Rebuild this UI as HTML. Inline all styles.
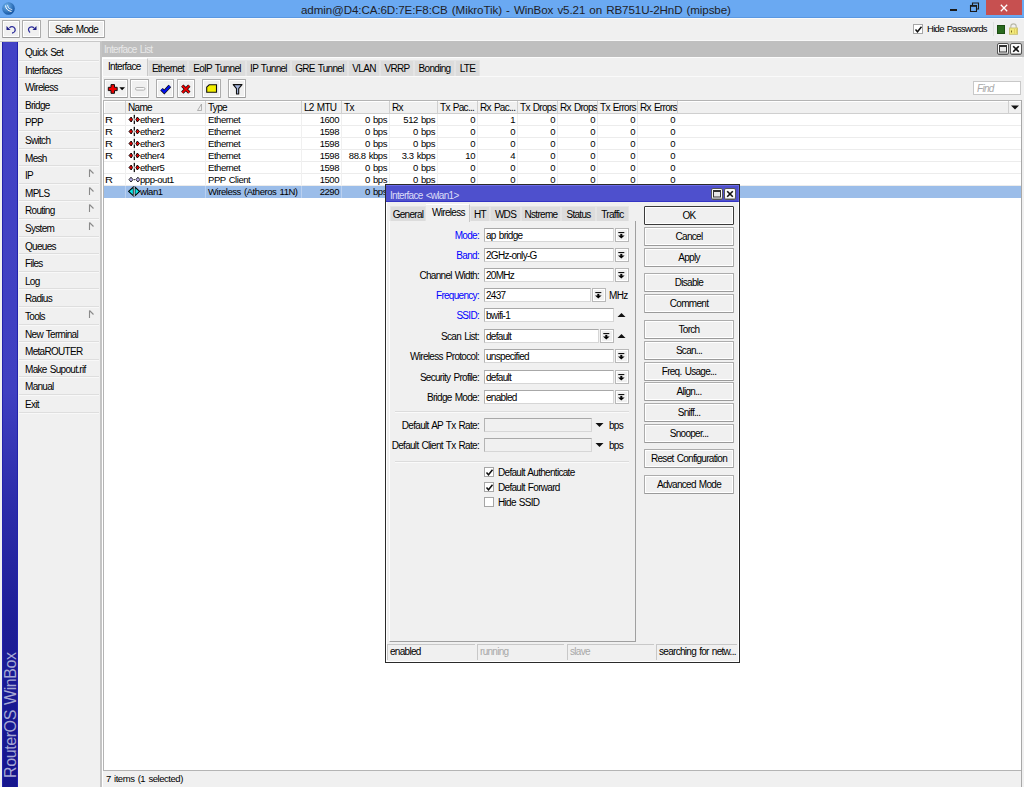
<!DOCTYPE html><html><head><meta charset="utf-8"><style>
*{margin:0;padding:0;box-sizing:border-box}
html,body{width:1024px;height:787px;overflow:hidden}
body{position:relative;background:#f0f0f0;font-family:"Liberation Sans",sans-serif;font-size:10px;color:#000;letter-spacing:-0.7px;word-spacing:1px}
.a{position:absolute}
.t{position:absolute;white-space:nowrap;line-height:12px;height:12px}
.r{font-size:9.5px;letter-spacing:-0.45px}
.rr{font-size:9.5px;transform:scaleX(1.15);transform-origin:0 0}
.btn{position:absolute;border:1px solid #acacac;border-bottom-color:#9a9a9a;border-radius:1px;background:#f0f0f0;box-shadow:inset 1px 1px 0 #fff,inset -1px -1px 0 #fff;text-align:center;line-height:18px;white-space:nowrap}
.fld{position:absolute;background:#fff;border:1px solid #d6d6d6;border-top-color:#a8a8a8;border-left-color:#b4b4b4;line-height:14px;padding-left:1px;white-space:nowrap}
.dd{position:absolute;background:#f0f0f0;border:1px solid #b8b8b8;box-shadow:inset 1px 1px 0 #fff,inset -1px -1px 0 #fff}
.sep{position:absolute;height:1px;background:#dcdcdc}
.tab{position:absolute;background:#dcdcdc;border:1px solid #e4e4e4;border-bottom:none;text-align:center;line-height:16px;white-space:nowrap}
.lbl{position:absolute;white-space:nowrap;line-height:12px;text-align:right}
.blue{color:#0000ff}
.gr{color:#a8a8a8}
</style></head><body>
<div class="a " style="left:0px;top:0px;width:1024px;height:18px;background:#6aa9f2"></div>
<div class="a " style="left:0px;top:17px;width:1024px;height:1px;background:#5a98e2"></div>
<svg class="a" style="left:1px;top:1px" width="15" height="15" viewBox="0 0 15 15"><defs><radialGradient id="ig" cx="0.35" cy="0.3" r="0.8"><stop offset="0" stop-color="#6fb2ec"/><stop offset="1" stop-color="#0d4d9c"/></radialGradient></defs><circle cx="7.5" cy="7.5" r="6.3" fill="url(#ig)"/><path d="M4.5 4.5 Q5 9.5 10.5 10.5" stroke="#fff" stroke-width="1" fill="none"/><path d="M6.3 3.8 Q6.8 8 11.3 8.8" stroke="#fff" stroke-width="0.8" fill="none" opacity="0.9"/></svg>
<div class="t " style="left:301px;top:3px;font-size:11.6px;letter-spacing:-0.1px;color:#1e1e28;line-height:14px;height:14px">admin@D4:CA:6D:7E:F8:CB (MikroTik) - WinBox v5.21 on RB751U-2HnD (mipsbe)</div>
<div class="a " style="left:950px;top:9px;width:7px;height:2px;background:#1a1a1a"></div>
<svg class="a" style="left:969px;top:2px" width="11" height="10"><rect x="1.5" y="3.5" width="6" height="6" fill="none" stroke="#1a1a1a" stroke-width="1.1"/><rect x="1" y="3" width="7" height="1.8" fill="#1a1a1a"/><path d="M3.5 3 V1 H9.5 V7 H8" fill="none" stroke="#1a1a1a" stroke-width="1.1"/></svg>
<div class="a " style="left:986px;top:0px;width:36px;height:15px;background:#c75050"></div>
<svg class="a" style="left:1000px;top:4px" width="8" height="8"><path d="M0.8 0.8 L7.2 7.2 M7.2 0.8 L0.8 7.2" stroke="#fff" stroke-width="1.3"/></svg>
<div class="a " style="left:0px;top:18px;width:1024px;height:1px;background:#fafafa"></div>
<div class="btn" style="left:2px;top:20px;width:18px;height:18px"></div>
<svg class="a" style="left:5px;top:23px" width="12" height="12"><path d="M4.5 4.8 A3.2 3.2 0 1 1 7 10" fill="none" stroke="#2b2b9a" stroke-width="1.3"/><path d="M1.5 3 L5.5 7 L1.5 7 Z" fill="#1f1f88"/></svg>
<div class="btn" style="left:22px;top:20px;width:19px;height:18px"></div>
<svg class="a" style="left:26px;top:23px" width="12" height="12"><path d="M8 5 Q6 2.8 3.5 4.5 Q1.3 6.5 4 9.5" fill="none" stroke="#2b2b9a" stroke-width="1.2"/><path d="M10.5 3 L6.5 7 L10.5 7 Z" fill="#1f1f88"/></svg>
<div class="btn" style="left:48px;top:20px;width:57px;height:18px;line-height:17px">Safe Mode</div>
<div class="a " style="left:913px;top:24px;width:10px;height:10px;background:#fff;border:1px solid #a6a6a6"></div>
<svg class="a" style="left:914px;top:25px" width="9" height="9"><path d="M1.5 4.5 L3.5 6.8 L7.5 1.8" fill="none" stroke="#111" stroke-width="1.5"/></svg>
<div class="t " style="left:927px;top:23px;font-size:9.5px">Hide Passwords</div>
<div class="a " style="left:993px;top:22px;width:1px;height:14px;background:#e0e0e0"></div>
<div class="a " style="left:997px;top:25px;width:8px;height:9px;background:#2a6a1e;border:1px solid #1c4d12"></div>
<svg class="a" style="left:1008px;top:23px" width="11" height="12"><path d="M2.8 5 V3.6 A2.7 2.7 0 0 1 8.2 3.6 V5" fill="none" stroke="#b8b8a8" stroke-width="1.1"/><rect x="1.5" y="5" width="8" height="6.3" fill="#f2ea7a" stroke="#c8c070" stroke-width="0.9"/><rect x="3" y="7.5" width="1" height="2" fill="#807020"/><rect x="6" y="6" width="0.8" height="4.5" fill="#e0c860"/><rect x="8" y="6" width="0.8" height="4.5" fill="#e0c860"/></svg>
<div class="a " style="left:0px;top:40px;width:1024px;height:1px;background:#f8f8f8"></div>
<div class="a " style="left:0px;top:41px;width:1024px;height:1px;background:#c8c8c8"></div>
<div class="a " style="left:2px;top:42px;width:16px;height:745px;background:linear-gradient(#4343c6 0%,#3f3fc1 47%,#2c2caa 62%,#1d1d97 78%,#16168d 100%);border-left:1px solid #2222aa;border-right:1px solid #2222aa"></div>
<div class="t" style="left:4px;top:778px;font-size:16px;letter-spacing:-0.4px;color:#a6a8d4;transform-origin:0 0;transform:rotate(-90deg);line-height:14px;height:14px">RouterOS WinBox</div>
<div class="t " style="left:25px;top:47px;">Quick Set</div>
<div class="sep" style="left:19px;top:60px;width:80px;background:#dedede"></div>
<div class="sep" style="left:19px;top:61px;width:80px;background:#f8f8f8"></div>
<div class="t " style="left:25px;top:65px;">Interfaces</div>
<div class="sep" style="left:19px;top:77px;width:80px;background:#dedede"></div>
<div class="sep" style="left:19px;top:78px;width:80px;background:#f8f8f8"></div>
<div class="t " style="left:25px;top:82px;">Wireless</div>
<div class="sep" style="left:19px;top:95px;width:80px;background:#dedede"></div>
<div class="sep" style="left:19px;top:96px;width:80px;background:#f8f8f8"></div>
<div class="t " style="left:25px;top:100px;">Bridge</div>
<div class="sep" style="left:19px;top:112px;width:80px;background:#dedede"></div>
<div class="sep" style="left:19px;top:113px;width:80px;background:#f8f8f8"></div>
<div class="t " style="left:25px;top:117px;">PPP</div>
<div class="sep" style="left:19px;top:130px;width:80px;background:#dedede"></div>
<div class="sep" style="left:19px;top:131px;width:80px;background:#f8f8f8"></div>
<div class="t " style="left:25px;top:135px;">Switch</div>
<div class="sep" style="left:19px;top:148px;width:80px;background:#dedede"></div>
<div class="sep" style="left:19px;top:149px;width:80px;background:#f8f8f8"></div>
<div class="t " style="left:25px;top:153px;">Mesh</div>
<div class="sep" style="left:19px;top:165px;width:80px;background:#dedede"></div>
<div class="sep" style="left:19px;top:166px;width:80px;background:#f8f8f8"></div>
<div class="t " style="left:25px;top:170px;">IP</div>
<div class="sep" style="left:19px;top:183px;width:80px;background:#dedede"></div>
<div class="sep" style="left:19px;top:184px;width:80px;background:#f8f8f8"></div>
<svg class="a" style="left:88px;top:169px" width="7" height="9"><path d="M1.5 0.5 V8 M1.5 0.5 L5.5 4.5" stroke="#8a8a8a" stroke-width="1.1" fill="none"/></svg>
<div class="t " style="left:25px;top:188px;">MPLS</div>
<div class="sep" style="left:19px;top:200px;width:80px;background:#dedede"></div>
<div class="sep" style="left:19px;top:201px;width:80px;background:#f8f8f8"></div>
<svg class="a" style="left:88px;top:187px" width="7" height="9"><path d="M1.5 0.5 V8 M1.5 0.5 L5.5 4.5" stroke="#8a8a8a" stroke-width="1.1" fill="none"/></svg>
<div class="t " style="left:25px;top:205px;">Routing</div>
<div class="sep" style="left:19px;top:218px;width:80px;background:#dedede"></div>
<div class="sep" style="left:19px;top:219px;width:80px;background:#f8f8f8"></div>
<svg class="a" style="left:88px;top:204px" width="7" height="9"><path d="M1.5 0.5 V8 M1.5 0.5 L5.5 4.5" stroke="#8a8a8a" stroke-width="1.1" fill="none"/></svg>
<div class="t " style="left:25px;top:223px;">System</div>
<div class="sep" style="left:19px;top:236px;width:80px;background:#dedede"></div>
<div class="sep" style="left:19px;top:237px;width:80px;background:#f8f8f8"></div>
<svg class="a" style="left:88px;top:222px" width="7" height="9"><path d="M1.5 0.5 V8 M1.5 0.5 L5.5 4.5" stroke="#8a8a8a" stroke-width="1.1" fill="none"/></svg>
<div class="t " style="left:25px;top:241px;">Queues</div>
<div class="sep" style="left:19px;top:253px;width:80px;background:#dedede"></div>
<div class="sep" style="left:19px;top:254px;width:80px;background:#f8f8f8"></div>
<div class="t " style="left:25px;top:258px;">Files</div>
<div class="sep" style="left:19px;top:271px;width:80px;background:#dedede"></div>
<div class="sep" style="left:19px;top:272px;width:80px;background:#f8f8f8"></div>
<div class="t " style="left:25px;top:276px;">Log</div>
<div class="sep" style="left:19px;top:288px;width:80px;background:#dedede"></div>
<div class="sep" style="left:19px;top:289px;width:80px;background:#f8f8f8"></div>
<div class="t " style="left:25px;top:293px;">Radius</div>
<div class="sep" style="left:19px;top:306px;width:80px;background:#dedede"></div>
<div class="sep" style="left:19px;top:307px;width:80px;background:#f8f8f8"></div>
<div class="t " style="left:25px;top:311px;">Tools</div>
<div class="sep" style="left:19px;top:324px;width:80px;background:#dedede"></div>
<div class="sep" style="left:19px;top:325px;width:80px;background:#f8f8f8"></div>
<svg class="a" style="left:88px;top:310px" width="7" height="9"><path d="M1.5 0.5 V8 M1.5 0.5 L5.5 4.5" stroke="#8a8a8a" stroke-width="1.1" fill="none"/></svg>
<div class="t " style="left:25px;top:329px;">New Terminal</div>
<div class="sep" style="left:19px;top:341px;width:80px;background:#dedede"></div>
<div class="sep" style="left:19px;top:342px;width:80px;background:#f8f8f8"></div>
<div class="t " style="left:25px;top:346px;">MetaROUTER</div>
<div class="sep" style="left:19px;top:359px;width:80px;background:#dedede"></div>
<div class="sep" style="left:19px;top:360px;width:80px;background:#f8f8f8"></div>
<div class="t " style="left:25px;top:364px;">Make Supout.rif</div>
<div class="sep" style="left:19px;top:376px;width:80px;background:#dedede"></div>
<div class="sep" style="left:19px;top:377px;width:80px;background:#f8f8f8"></div>
<div class="t " style="left:25px;top:381px;">Manual</div>
<div class="sep" style="left:19px;top:394px;width:80px;background:#dedede"></div>
<div class="sep" style="left:19px;top:395px;width:80px;background:#f8f8f8"></div>
<div class="t " style="left:25px;top:399px;">Exit</div>
<div class="sep" style="left:19px;top:412px;width:80px;background:#dedede"></div>
<div class="sep" style="left:19px;top:413px;width:80px;background:#f8f8f8"></div>
<div class="a " style="left:100px;top:42px;width:2px;height:745px;background:#c4c4c4"></div>
<div class="a " style="left:102px;top:57px;width:1px;height:730px;background:#fff"></div>
<div class="a " style="left:102px;top:41px;width:922px;height:16px;background:#bfbfbf"></div>
<div class="t " style="left:104px;top:44px;color:#e9e9e9">Interface List</div>
<div class="a" style="left:997px;top:43px;width:12px;height:12px;border:1px solid #555;border-radius:2px;background:#fbfbfb;box-shadow:inset 0 -1px 0 #aaa"></div>
<svg class="a" style="left:999px;top:45px" width="8" height="8"><rect x="0.5" y="0.5" width="7" height="6.5" fill="#e8e8e8" stroke="#333"/><rect x="0" y="0" width="8" height="2" fill="#333"/></svg>
<div class="a" style="left:1010px;top:43px;width:12px;height:12px;border:1px solid #555;border-radius:2px;background:#fbfbfb;box-shadow:inset 0 -1px 0 #aaa"></div>
<svg class="a" style="left:1012px;top:45px" width="8" height="8"><path d="M1.2 1.2 L6.8 6.8 M6.8 1.2 L1.2 6.8" stroke="#111" stroke-width="1.6"/></svg>
<div class="a " style="left:102px;top:57px;width:920px;height:1px;background:#fcfcfc"></div>
<div class="a" style="left:103px;top:58px;width:45px;height:18px;background:#f0f0f0;border-right:1px solid #c8c8c8;border-top:1px solid #fff"></div>
<div class="t " style="left:108px;top:61px;">Interface</div>
<div class="tab" style="left:148px;top:60px;width:40px;height:16px">Ethernet</div>
<div class="tab" style="left:188px;top:60px;width:58px;height:16px">EoIP Tunnel</div>
<div class="tab" style="left:246px;top:60px;width:45px;height:16px">IP Tunnel</div>
<div class="tab" style="left:291px;top:60px;width:57px;height:16px">GRE Tunnel</div>
<div class="tab" style="left:348px;top:60px;width:32px;height:16px">VLAN</div>
<div class="tab" style="left:380px;top:60px;width:34px;height:16px">VRRP</div>
<div class="tab" style="left:414px;top:60px;width:41px;height:16px">Bonding</div>
<div class="tab" style="left:455px;top:60px;width:25px;height:16px">LTE</div>
<div class="a " style="left:102px;top:76px;width:920px;height:1px;background:#fafafa"></div>
<div class="btn" style="left:104px;top:79px;width:24px;height:19px"></div>
<div class="btn" style="left:130px;top:79px;width:19px;height:19px"></div>
<div class="btn" style="left:156px;top:79px;width:18px;height:19px"></div>
<div class="btn" style="left:177px;top:79px;width:18px;height:19px"></div>
<div class="btn" style="left:202px;top:79px;width:19px;height:19px"></div>
<div class="btn" style="left:228px;top:79px;width:18px;height:19px"></div>
<svg class="a" style="left:100px;top:78px" width="150" height="20"><path d="M11 6.6 H14.5 V9.3 H17.2 V12.6 H14.5 V15.3 H11 V12.6 H8.3 V9.3 H11 Z" fill="#f00000" stroke="#111" stroke-width="1"/><path d="M19.3 9.2 H25 L22.15 12.2 Z" fill="#000"/><rect x="35.5" y="9.5" width="9.5" height="2.6" rx="1.3" fill="#fafafa" stroke="#b0b0b0" stroke-width="1"/><path d="M61.5 11.2 L64.3 14 L69.8 8" fill="none" stroke="#111" stroke-width="3.6" stroke-linejoin="miter"/><path d="M61.5 11.2 L64.3 14 L69.8 8" fill="none" stroke="#0010f0" stroke-width="2"/><path d="M82.3 7.6 L89.3 14.6 M89.3 7.6 L82.3 14.6" stroke="#111" stroke-width="3.4"/><path d="M82.3 7.6 L89.3 14.6 M89.3 7.6 L82.3 14.6" stroke="#f00000" stroke-width="1.9"/><path d="M106.7 9.2 L109.2 6.8 H116.5 V14.3 H106.7 Z" fill="#f4f000" stroke="#111" stroke-width="1.1"/><path d="M133.2 6.6 H142 L138.7 10.6 V16 H136.5 V10.6 Z" fill="#a4b4dc" stroke="#111" stroke-width="1.1" stroke-linejoin="round"/></svg>
<div class="a" style="left:973px;top:81px;width:48px;height:14px;background:#fff;border:1px solid #c8c8c8"></div>
<div class="t " style="left:977px;top:83px;font-style:italic;color:#a8a8a8;-webkit-text-stroke:0">Find</div>
<div class="a " style="left:103px;top:100px;width:919px;height:671px;background:#fff;border:1px solid #b4b4b4;border-right-color:#a8a8a8"></div>
<div class="a " style="left:104px;top:101px;width:917px;height:13px;background:#f0f0f0;border-bottom:1px solid #cfcfcf;box-shadow:inset 1px 1px 0 #fff"></div>
<div class="a " style="left:125px;top:101px;width:1px;height:13px;background:#d0d0d0"></div>
<div class="t " style="left:128px;top:102px;">Name</div>
<div class="a " style="left:205px;top:101px;width:1px;height:13px;background:#d0d0d0"></div>
<div class="t " style="left:208px;top:102px;">Type</div>
<div class="a " style="left:301px;top:101px;width:1px;height:13px;background:#d0d0d0"></div>
<div class="t " style="left:304px;top:102px;">L2 MTU</div>
<div class="a " style="left:341px;top:101px;width:1px;height:13px;background:#d0d0d0"></div>
<div class="t " style="left:344px;top:102px;">Tx</div>
<div class="a " style="left:389px;top:101px;width:1px;height:13px;background:#d0d0d0"></div>
<div class="t " style="left:392px;top:102px;">Rx</div>
<div class="a " style="left:437px;top:101px;width:1px;height:13px;background:#d0d0d0"></div>
<div class="t " style="left:440px;top:102px;">Tx Pac...</div>
<div class="a " style="left:477px;top:101px;width:1px;height:13px;background:#d0d0d0"></div>
<div class="t " style="left:480px;top:102px;">Rx Pac...</div>
<div class="a " style="left:517px;top:101px;width:1px;height:13px;background:#d0d0d0"></div>
<div class="t " style="left:520px;top:102px;">Tx Drops</div>
<div class="a " style="left:557px;top:101px;width:1px;height:13px;background:#d0d0d0"></div>
<div class="t " style="left:560px;top:102px;">Rx Drops</div>
<div class="a " style="left:597px;top:101px;width:1px;height:13px;background:#d0d0d0"></div>
<div class="t " style="left:600px;top:102px;">Tx Errors</div>
<div class="a " style="left:637px;top:101px;width:1px;height:13px;background:#d0d0d0"></div>
<div class="t " style="left:640px;top:102px;">Rx Errors</div>
<div class="a " style="left:677px;top:101px;width:1px;height:13px;background:#d0d0d0"></div>
<div class="a " style="left:1008px;top:101px;width:1px;height:13px;background:#d0d0d0"></div>
<svg class="a" style="left:1010px;top:104px" width="10" height="7"><path d="M1 1.5 H9 L5 5.5 Z" fill="#111"/></svg>
<svg class="a" style="left:197px;top:103px" width="6" height="9"><path d="M0.5 7.5 L4.5 1 V7.5 Z" fill="none" stroke="#a0a0a0" stroke-width="0.8"/></svg>
<div class="a " style="left:104px;top:125px;width:917px;height:1px;background:#ececec"></div>
<div class="a " style="left:125px;top:114px;width:1px;height:12px;background:#f0f0f0"></div>
<div class="a " style="left:205px;top:114px;width:1px;height:12px;background:#f0f0f0"></div>
<div class="a " style="left:301px;top:114px;width:1px;height:12px;background:#f0f0f0"></div>
<div class="a " style="left:341px;top:114px;width:1px;height:12px;background:#f0f0f0"></div>
<div class="a " style="left:389px;top:114px;width:1px;height:12px;background:#f0f0f0"></div>
<div class="a " style="left:437px;top:114px;width:1px;height:12px;background:#f0f0f0"></div>
<div class="a " style="left:477px;top:114px;width:1px;height:12px;background:#f0f0f0"></div>
<div class="a " style="left:517px;top:114px;width:1px;height:12px;background:#f0f0f0"></div>
<div class="a " style="left:557px;top:114px;width:1px;height:12px;background:#f0f0f0"></div>
<div class="a " style="left:597px;top:114px;width:1px;height:12px;background:#f0f0f0"></div>
<div class="a " style="left:637px;top:114px;width:1px;height:12px;background:#f0f0f0"></div>
<div class="t r rr" style="left:105px;top:114px;">R</div>
<svg class="a" style="left:128px;top:114px" width="12" height="12"><path d="M1 5.5 L3.2 3 L4.6 5.5 L3.2 8 Z" fill="#e00000" stroke="#000" stroke-width="0.9"/><path d="M11.5 5.5 L9.3 3 L7.9 5.5 L9.3 8 Z" fill="#e00000" stroke="#000" stroke-width="0.9"/><rect x="5.7" y="0.8" width="1.2" height="3.8" fill="#000"/><rect x="5.7" y="6.5" width="1.2" height="3.6" fill="#000"/><rect x="5.9" y="5.1" width="0.8" height="0.8" fill="#777"/></svg>
<div class="t r" style="left:140px;top:114px;">ether1</div>
<div class="t r" style="left:208px;top:114px;">Ethernet</div>
<div class="t r" style="left:302px;top:114px;width:37px;text-align:right">1600</div>
<div class="t r" style="left:342px;top:114px;width:45px;text-align:right">0 bps</div>
<div class="t r" style="left:390px;top:114px;width:45px;text-align:right">512 bps</div>
<div class="t r" style="left:438px;top:114px;width:37px;text-align:right">0</div>
<div class="t r" style="left:478px;top:114px;width:37px;text-align:right">1</div>
<div class="t r" style="left:518px;top:114px;width:37px;text-align:right">0</div>
<div class="t r" style="left:558px;top:114px;width:37px;text-align:right">0</div>
<div class="t r" style="left:598px;top:114px;width:37px;text-align:right">0</div>
<div class="t r" style="left:638px;top:114px;width:37px;text-align:right">0</div>
<div class="a " style="left:104px;top:137px;width:917px;height:1px;background:#ececec"></div>
<div class="a " style="left:125px;top:126px;width:1px;height:12px;background:#f0f0f0"></div>
<div class="a " style="left:205px;top:126px;width:1px;height:12px;background:#f0f0f0"></div>
<div class="a " style="left:301px;top:126px;width:1px;height:12px;background:#f0f0f0"></div>
<div class="a " style="left:341px;top:126px;width:1px;height:12px;background:#f0f0f0"></div>
<div class="a " style="left:389px;top:126px;width:1px;height:12px;background:#f0f0f0"></div>
<div class="a " style="left:437px;top:126px;width:1px;height:12px;background:#f0f0f0"></div>
<div class="a " style="left:477px;top:126px;width:1px;height:12px;background:#f0f0f0"></div>
<div class="a " style="left:517px;top:126px;width:1px;height:12px;background:#f0f0f0"></div>
<div class="a " style="left:557px;top:126px;width:1px;height:12px;background:#f0f0f0"></div>
<div class="a " style="left:597px;top:126px;width:1px;height:12px;background:#f0f0f0"></div>
<div class="a " style="left:637px;top:126px;width:1px;height:12px;background:#f0f0f0"></div>
<div class="t r rr" style="left:105px;top:126px;">R</div>
<svg class="a" style="left:128px;top:126px" width="12" height="12"><path d="M1 5.5 L3.2 3 L4.6 5.5 L3.2 8 Z" fill="#e00000" stroke="#000" stroke-width="0.9"/><path d="M11.5 5.5 L9.3 3 L7.9 5.5 L9.3 8 Z" fill="#e00000" stroke="#000" stroke-width="0.9"/><rect x="5.7" y="0.8" width="1.2" height="3.8" fill="#000"/><rect x="5.7" y="6.5" width="1.2" height="3.6" fill="#000"/><rect x="5.9" y="5.1" width="0.8" height="0.8" fill="#777"/></svg>
<div class="t r" style="left:140px;top:126px;">ether2</div>
<div class="t r" style="left:208px;top:126px;">Ethernet</div>
<div class="t r" style="left:302px;top:126px;width:37px;text-align:right">1598</div>
<div class="t r" style="left:342px;top:126px;width:45px;text-align:right">0 bps</div>
<div class="t r" style="left:390px;top:126px;width:45px;text-align:right">0 bps</div>
<div class="t r" style="left:438px;top:126px;width:37px;text-align:right">0</div>
<div class="t r" style="left:478px;top:126px;width:37px;text-align:right">0</div>
<div class="t r" style="left:518px;top:126px;width:37px;text-align:right">0</div>
<div class="t r" style="left:558px;top:126px;width:37px;text-align:right">0</div>
<div class="t r" style="left:598px;top:126px;width:37px;text-align:right">0</div>
<div class="t r" style="left:638px;top:126px;width:37px;text-align:right">0</div>
<div class="a " style="left:104px;top:149px;width:917px;height:1px;background:#ececec"></div>
<div class="a " style="left:125px;top:138px;width:1px;height:12px;background:#f0f0f0"></div>
<div class="a " style="left:205px;top:138px;width:1px;height:12px;background:#f0f0f0"></div>
<div class="a " style="left:301px;top:138px;width:1px;height:12px;background:#f0f0f0"></div>
<div class="a " style="left:341px;top:138px;width:1px;height:12px;background:#f0f0f0"></div>
<div class="a " style="left:389px;top:138px;width:1px;height:12px;background:#f0f0f0"></div>
<div class="a " style="left:437px;top:138px;width:1px;height:12px;background:#f0f0f0"></div>
<div class="a " style="left:477px;top:138px;width:1px;height:12px;background:#f0f0f0"></div>
<div class="a " style="left:517px;top:138px;width:1px;height:12px;background:#f0f0f0"></div>
<div class="a " style="left:557px;top:138px;width:1px;height:12px;background:#f0f0f0"></div>
<div class="a " style="left:597px;top:138px;width:1px;height:12px;background:#f0f0f0"></div>
<div class="a " style="left:637px;top:138px;width:1px;height:12px;background:#f0f0f0"></div>
<div class="t r rr" style="left:105px;top:138px;">R</div>
<svg class="a" style="left:128px;top:138px" width="12" height="12"><path d="M1 5.5 L3.2 3 L4.6 5.5 L3.2 8 Z" fill="#e00000" stroke="#000" stroke-width="0.9"/><path d="M11.5 5.5 L9.3 3 L7.9 5.5 L9.3 8 Z" fill="#e00000" stroke="#000" stroke-width="0.9"/><rect x="5.7" y="0.8" width="1.2" height="3.8" fill="#000"/><rect x="5.7" y="6.5" width="1.2" height="3.6" fill="#000"/><rect x="5.9" y="5.1" width="0.8" height="0.8" fill="#777"/></svg>
<div class="t r" style="left:140px;top:138px;">ether3</div>
<div class="t r" style="left:208px;top:138px;">Ethernet</div>
<div class="t r" style="left:302px;top:138px;width:37px;text-align:right">1598</div>
<div class="t r" style="left:342px;top:138px;width:45px;text-align:right">0 bps</div>
<div class="t r" style="left:390px;top:138px;width:45px;text-align:right">0 bps</div>
<div class="t r" style="left:438px;top:138px;width:37px;text-align:right">0</div>
<div class="t r" style="left:478px;top:138px;width:37px;text-align:right">0</div>
<div class="t r" style="left:518px;top:138px;width:37px;text-align:right">0</div>
<div class="t r" style="left:558px;top:138px;width:37px;text-align:right">0</div>
<div class="t r" style="left:598px;top:138px;width:37px;text-align:right">0</div>
<div class="t r" style="left:638px;top:138px;width:37px;text-align:right">0</div>
<div class="a " style="left:104px;top:161px;width:917px;height:1px;background:#ececec"></div>
<div class="a " style="left:125px;top:150px;width:1px;height:12px;background:#f0f0f0"></div>
<div class="a " style="left:205px;top:150px;width:1px;height:12px;background:#f0f0f0"></div>
<div class="a " style="left:301px;top:150px;width:1px;height:12px;background:#f0f0f0"></div>
<div class="a " style="left:341px;top:150px;width:1px;height:12px;background:#f0f0f0"></div>
<div class="a " style="left:389px;top:150px;width:1px;height:12px;background:#f0f0f0"></div>
<div class="a " style="left:437px;top:150px;width:1px;height:12px;background:#f0f0f0"></div>
<div class="a " style="left:477px;top:150px;width:1px;height:12px;background:#f0f0f0"></div>
<div class="a " style="left:517px;top:150px;width:1px;height:12px;background:#f0f0f0"></div>
<div class="a " style="left:557px;top:150px;width:1px;height:12px;background:#f0f0f0"></div>
<div class="a " style="left:597px;top:150px;width:1px;height:12px;background:#f0f0f0"></div>
<div class="a " style="left:637px;top:150px;width:1px;height:12px;background:#f0f0f0"></div>
<div class="t r rr" style="left:105px;top:150px;">R</div>
<svg class="a" style="left:128px;top:150px" width="12" height="12"><path d="M1 5.5 L3.2 3 L4.6 5.5 L3.2 8 Z" fill="#e00000" stroke="#000" stroke-width="0.9"/><path d="M11.5 5.5 L9.3 3 L7.9 5.5 L9.3 8 Z" fill="#e00000" stroke="#000" stroke-width="0.9"/><rect x="5.7" y="0.8" width="1.2" height="3.8" fill="#000"/><rect x="5.7" y="6.5" width="1.2" height="3.6" fill="#000"/><rect x="5.9" y="5.1" width="0.8" height="0.8" fill="#777"/></svg>
<div class="t r" style="left:140px;top:150px;">ether4</div>
<div class="t r" style="left:208px;top:150px;">Ethernet</div>
<div class="t r" style="left:302px;top:150px;width:37px;text-align:right">1598</div>
<div class="t r" style="left:342px;top:150px;width:45px;text-align:right">88.8 kbps</div>
<div class="t r" style="left:390px;top:150px;width:45px;text-align:right">3.3 kbps</div>
<div class="t r" style="left:438px;top:150px;width:37px;text-align:right">10</div>
<div class="t r" style="left:478px;top:150px;width:37px;text-align:right">4</div>
<div class="t r" style="left:518px;top:150px;width:37px;text-align:right">0</div>
<div class="t r" style="left:558px;top:150px;width:37px;text-align:right">0</div>
<div class="t r" style="left:598px;top:150px;width:37px;text-align:right">0</div>
<div class="t r" style="left:638px;top:150px;width:37px;text-align:right">0</div>
<div class="a " style="left:104px;top:173px;width:917px;height:1px;background:#ececec"></div>
<div class="a " style="left:125px;top:162px;width:1px;height:12px;background:#f0f0f0"></div>
<div class="a " style="left:205px;top:162px;width:1px;height:12px;background:#f0f0f0"></div>
<div class="a " style="left:301px;top:162px;width:1px;height:12px;background:#f0f0f0"></div>
<div class="a " style="left:341px;top:162px;width:1px;height:12px;background:#f0f0f0"></div>
<div class="a " style="left:389px;top:162px;width:1px;height:12px;background:#f0f0f0"></div>
<div class="a " style="left:437px;top:162px;width:1px;height:12px;background:#f0f0f0"></div>
<div class="a " style="left:477px;top:162px;width:1px;height:12px;background:#f0f0f0"></div>
<div class="a " style="left:517px;top:162px;width:1px;height:12px;background:#f0f0f0"></div>
<div class="a " style="left:557px;top:162px;width:1px;height:12px;background:#f0f0f0"></div>
<div class="a " style="left:597px;top:162px;width:1px;height:12px;background:#f0f0f0"></div>
<div class="a " style="left:637px;top:162px;width:1px;height:12px;background:#f0f0f0"></div>
<svg class="a" style="left:128px;top:162px" width="12" height="12"><path d="M1 5.5 L3.2 3 L4.6 5.5 L3.2 8 Z" fill="#e00000" stroke="#000" stroke-width="0.9"/><path d="M11.5 5.5 L9.3 3 L7.9 5.5 L9.3 8 Z" fill="#e00000" stroke="#000" stroke-width="0.9"/><rect x="5.7" y="0.8" width="1.2" height="3.8" fill="#000"/><rect x="5.7" y="6.5" width="1.2" height="3.6" fill="#000"/><rect x="5.9" y="5.1" width="0.8" height="0.8" fill="#777"/></svg>
<div class="t r" style="left:140px;top:162px;">ether5</div>
<div class="t r" style="left:208px;top:162px;">Ethernet</div>
<div class="t r" style="left:302px;top:162px;width:37px;text-align:right">1598</div>
<div class="t r" style="left:342px;top:162px;width:45px;text-align:right">0 bps</div>
<div class="t r" style="left:390px;top:162px;width:45px;text-align:right">0 bps</div>
<div class="t r" style="left:438px;top:162px;width:37px;text-align:right">0</div>
<div class="t r" style="left:478px;top:162px;width:37px;text-align:right">0</div>
<div class="t r" style="left:518px;top:162px;width:37px;text-align:right">0</div>
<div class="t r" style="left:558px;top:162px;width:37px;text-align:right">0</div>
<div class="t r" style="left:598px;top:162px;width:37px;text-align:right">0</div>
<div class="t r" style="left:638px;top:162px;width:37px;text-align:right">0</div>
<div class="a " style="left:104px;top:185px;width:917px;height:1px;background:#ececec"></div>
<div class="a " style="left:125px;top:174px;width:1px;height:12px;background:#f0f0f0"></div>
<div class="a " style="left:205px;top:174px;width:1px;height:12px;background:#f0f0f0"></div>
<div class="a " style="left:301px;top:174px;width:1px;height:12px;background:#f0f0f0"></div>
<div class="a " style="left:341px;top:174px;width:1px;height:12px;background:#f0f0f0"></div>
<div class="a " style="left:389px;top:174px;width:1px;height:12px;background:#f0f0f0"></div>
<div class="a " style="left:437px;top:174px;width:1px;height:12px;background:#f0f0f0"></div>
<div class="a " style="left:477px;top:174px;width:1px;height:12px;background:#f0f0f0"></div>
<div class="a " style="left:517px;top:174px;width:1px;height:12px;background:#f0f0f0"></div>
<div class="a " style="left:557px;top:174px;width:1px;height:12px;background:#f0f0f0"></div>
<div class="a " style="left:597px;top:174px;width:1px;height:12px;background:#f0f0f0"></div>
<div class="a " style="left:637px;top:174px;width:1px;height:12px;background:#f0f0f0"></div>
<div class="t r rr" style="left:105px;top:174px;">R</div>
<svg class="a" style="left:128px;top:174px" width="12" height="12"><path d="M1 5.6 L3 3.2 L5 5.6 L3 8 Z" fill="#b8b0ec" stroke="#111" stroke-width="0.9"/><path d="M7.9 5.6 L9.9 3.2 L11.9 5.6 L9.9 8 Z" fill="#b8b0ec" stroke="#111" stroke-width="0.9"/><rect x="5.8" y="5.1" width="1.1" height="1.1" fill="#222"/></svg>
<div class="t r" style="left:140px;top:174px;">ppp-out1</div>
<div class="t r" style="left:208px;top:174px;">PPP Client</div>
<div class="t r" style="left:302px;top:174px;width:37px;text-align:right">1500</div>
<div class="t r" style="left:342px;top:174px;width:45px;text-align:right">0 bps</div>
<div class="t r" style="left:390px;top:174px;width:45px;text-align:right">0 bps</div>
<div class="t r" style="left:438px;top:174px;width:37px;text-align:right">0</div>
<div class="t r" style="left:478px;top:174px;width:37px;text-align:right">0</div>
<div class="t r" style="left:518px;top:174px;width:37px;text-align:right">0</div>
<div class="t r" style="left:558px;top:174px;width:37px;text-align:right">0</div>
<div class="t r" style="left:598px;top:174px;width:37px;text-align:right">0</div>
<div class="t r" style="left:638px;top:174px;width:37px;text-align:right">0</div>
<div class="a " style="left:104px;top:186px;width:917px;height:12px;background:#9bbde9"></div>
<div class="a " style="left:125px;top:186px;width:1px;height:12px;background:#b9d0f0"></div>
<div class="a " style="left:205px;top:186px;width:1px;height:12px;background:#b9d0f0"></div>
<div class="a " style="left:301px;top:186px;width:1px;height:12px;background:#b9d0f0"></div>
<div class="a " style="left:341px;top:186px;width:1px;height:12px;background:#b9d0f0"></div>
<div class="a " style="left:389px;top:186px;width:1px;height:12px;background:#b9d0f0"></div>
<div class="a " style="left:437px;top:186px;width:1px;height:12px;background:#b9d0f0"></div>
<div class="a " style="left:477px;top:186px;width:1px;height:12px;background:#b9d0f0"></div>
<div class="a " style="left:517px;top:186px;width:1px;height:12px;background:#b9d0f0"></div>
<div class="a " style="left:557px;top:186px;width:1px;height:12px;background:#b9d0f0"></div>
<div class="a " style="left:597px;top:186px;width:1px;height:12px;background:#b9d0f0"></div>
<div class="a " style="left:637px;top:186px;width:1px;height:12px;background:#b9d0f0"></div>
<svg class="a" style="left:128px;top:186px" width="12" height="12"><path d="M0.6 5.4 L5.4 1 V9.8 Z" fill="#10e8e8" stroke="#000" stroke-width="1.1"/><path d="M11.6 5.4 L6.9 1 V9.8 Z" fill="#10e8e8" stroke="#000" stroke-width="1.1"/><path d="M6.15 0.5 V10.5" stroke="#e8f4ff" stroke-width="0.9"/></svg>
<div class="t r" style="left:140px;top:186px;">wlan1</div>
<div class="t r" style="left:208px;top:186px;">Wireless (Atheros 11N)</div>
<div class="t r" style="left:302px;top:186px;width:37px;text-align:right">2290</div>
<div class="t r" style="left:342px;top:186px;width:45px;text-align:right">0 bps</div>
<div class="t r" style="left:106px;top:773px;">7 items (1 selected)</div>
<div class="a " style="left:1021px;top:100px;width:1px;height:687px;background:#a8a8a8"></div>
<div class="a " style="left:385px;top:184px;width:355px;height:479px;background:#f0f0f0;border:1px solid #2a2a2a;box-shadow:inset 1px 1px 0 #fff,inset -1px -1px 0 #fff"></div>
<div class="a " style="left:386px;top:185px;width:353px;height:17px;background:#4e50cd;border-top:1px solid #6c6ce6;border-bottom:1px solid #3434c4;border-right:1px solid #6464e0"></div>
<div class="t " style="left:390px;top:190px;color:#dcdcf8">Interface &lt;wlan1&gt;</div>
<div class="a" style="left:711px;top:188px;width:12px;height:12px;border:1px solid #555;border-radius:2px;background:#fbfbfb;box-shadow:inset 0 -1px 0 #aaa"></div>
<svg class="a" style="left:713px;top:190px" width="8" height="8"><rect x="0.5" y="0.5" width="7" height="6.5" fill="#e8e8e8" stroke="#333"/><rect x="0" y="0" width="8" height="2" fill="#333"/></svg>
<div class="a" style="left:724px;top:188px;width:12px;height:12px;border:1px solid #555;border-radius:2px;background:#fbfbfb;box-shadow:inset 0 -1px 0 #aaa"></div>
<svg class="a" style="left:726px;top:190px" width="8" height="8"><path d="M1.2 1.2 L6.8 6.8 M6.8 1.2 L1.2 6.8" stroke="#111" stroke-width="1.6"/></svg>
<div class="tab" style="left:390px;top:206px;width:36px;height:15px;line-height:16px">General</div>
<div class="a" style="left:426px;top:204px;width:44px;height:18px;background:#f0f0f0;border-right:1px solid #c8c8c8;border-top:1px solid #fff"></div>
<div class="t " style="left:432px;top:207px;">Wireless</div>
<div class="tab" style="left:470px;top:206px;width:20px;height:15px;line-height:16px">HT</div>
<div class="tab" style="left:490px;top:206px;width:31px;height:15px;line-height:16px">WDS</div>
<div class="tab" style="left:521px;top:206px;width:40px;height:15px;line-height:16px">Nstreme</div>
<div class="tab" style="left:561px;top:206px;width:35px;height:15px;line-height:16px">Status</div>
<div class="tab" style="left:596px;top:206px;width:33px;height:15px;line-height:16px">Traffic</div>
<div class="a " style="left:389px;top:221px;width:247px;height:421px;border-right:1px solid #a0a0a0;border-bottom:1px solid #a0a0a0;border-left:1px solid #fff"></div>
<div class="lbl blue" style="left:380px;width:99px;top:230px;">Mode:</div>
<div class="fld" style="left:484px;top:228px;width:130px;height:14px;background:#fff">ap bridge</div>
<div class="dd" style="left:615px;top:228px;width:14px;height:14px"></div>
<svg class="a" style="left:618px;top:232px" width="8" height="8"><rect x="0.3" y="0" width="6" height="1.1" fill="#111"/><rect x="2.3" y="1.9" width="2" height="2" fill="#000"/><path d="M0 3.4 H6.6 L3.3 6.6 Z" fill="#000"/></svg>
<div class="lbl blue" style="left:380px;width:99px;top:250px;">Band:</div>
<div class="fld" style="left:484px;top:248px;width:130px;height:14px;background:#fff">2GHz-only-G</div>
<div class="dd" style="left:615px;top:248px;width:14px;height:14px"></div>
<svg class="a" style="left:618px;top:252px" width="8" height="8"><rect x="0.3" y="0" width="6" height="1.1" fill="#111"/><rect x="2.3" y="1.9" width="2" height="2" fill="#000"/><path d="M0 3.4 H6.6 L3.3 6.6 Z" fill="#000"/></svg>
<div class="lbl " style="left:380px;width:99px;top:270px;">Channel Width:</div>
<div class="fld" style="left:484px;top:268px;width:130px;height:14px;background:#fff">20MHz</div>
<div class="dd" style="left:615px;top:268px;width:14px;height:14px"></div>
<svg class="a" style="left:618px;top:272px" width="8" height="8"><rect x="0.3" y="0" width="6" height="1.1" fill="#111"/><rect x="2.3" y="1.9" width="2" height="2" fill="#000"/><path d="M0 3.4 H6.6 L3.3 6.6 Z" fill="#000"/></svg>
<div class="lbl blue" style="left:380px;width:99px;top:290px;">Frequency:</div>
<div class="fld" style="left:484px;top:288px;width:107px;height:14px;background:#fff">2437</div>
<div class="dd" style="left:592px;top:288px;width:14px;height:14px"></div>
<svg class="a" style="left:595px;top:292px" width="8" height="8"><rect x="0.3" y="0" width="6" height="1.1" fill="#111"/><rect x="2.3" y="1.9" width="2" height="2" fill="#000"/><path d="M0 3.4 H6.6 L3.3 6.6 Z" fill="#000"/></svg>
<div class="t " style="left:609px;top:290px;">MHz</div>
<div class="lbl blue" style="left:380px;width:99px;top:310px;">SSID:</div>
<div class="fld" style="left:484px;top:308px;width:130px;height:14px;background:#fff">bwifi-1</div>
<svg class="a" style="left:617px;top:312px" width="9" height="6"><path d="M0.5 5 H8.5 L4.5 1 Z" fill="#111"/></svg>
<div class="lbl " style="left:380px;width:99px;top:331px;">Scan List:</div>
<div class="fld" style="left:484px;top:329px;width:115px;height:14px;background:#fff">default</div>
<div class="dd" style="left:600px;top:329px;width:14px;height:14px"></div>
<svg class="a" style="left:603px;top:333px" width="8" height="8"><rect x="0.3" y="0" width="6" height="1.1" fill="#111"/><rect x="2.3" y="1.9" width="2" height="2" fill="#000"/><path d="M0 3.4 H6.6 L3.3 6.6 Z" fill="#000"/></svg>
<svg class="a" style="left:617px;top:333px" width="9" height="6"><path d="M0.5 5 H8.5 L4.5 1 Z" fill="#111"/></svg>
<div class="lbl " style="left:380px;width:99px;top:351px;">Wireless Protocol:</div>
<div class="fld" style="left:484px;top:349px;width:130px;height:14px;background:#fff">unspecified</div>
<div class="dd" style="left:615px;top:349px;width:14px;height:14px"></div>
<svg class="a" style="left:618px;top:353px" width="8" height="8"><rect x="0.3" y="0" width="6" height="1.1" fill="#111"/><rect x="2.3" y="1.9" width="2" height="2" fill="#000"/><path d="M0 3.4 H6.6 L3.3 6.6 Z" fill="#000"/></svg>
<div class="lbl " style="left:380px;width:99px;top:372px;">Security Profile:</div>
<div class="fld" style="left:484px;top:370px;width:130px;height:14px;background:#fff">default</div>
<div class="dd" style="left:615px;top:370px;width:14px;height:14px"></div>
<svg class="a" style="left:618px;top:374px" width="8" height="8"><rect x="0.3" y="0" width="6" height="1.1" fill="#111"/><rect x="2.3" y="1.9" width="2" height="2" fill="#000"/><path d="M0 3.4 H6.6 L3.3 6.6 Z" fill="#000"/></svg>
<div class="lbl " style="left:380px;width:99px;top:392px;">Bridge Mode:</div>
<div class="fld" style="left:484px;top:390px;width:130px;height:14px;background:#fff">enabled</div>
<div class="dd" style="left:615px;top:390px;width:14px;height:14px"></div>
<svg class="a" style="left:618px;top:394px" width="8" height="8"><rect x="0.3" y="0" width="6" height="1.1" fill="#111"/><rect x="2.3" y="1.9" width="2" height="2" fill="#000"/><path d="M0 3.4 H6.6 L3.3 6.6 Z" fill="#000"/></svg>
<div class="sep" style="left:395px;top:411px;width:234px;background:#dcdcdc"></div>
<div class="sep" style="left:395px;top:412px;width:234px;background:#fafafa"></div>
<div class="lbl " style="left:380px;width:99px;top:420px;">Default AP Tx Rate:</div>
<div class="fld" style="left:484px;top:418px;width:108px;height:14px;background:#f0f0f0"></div>
<svg class="a" style="left:595px;top:422px" width="9" height="6"><path d="M0.5 1 H8.5 L4.5 5 Z" fill="#111"/></svg>
<div class="t " style="left:609px;top:420px;">bps</div>
<div class="lbl " style="left:380px;width:99px;top:440px;">Default Client Tx Rate:</div>
<div class="fld" style="left:484px;top:438px;width:108px;height:14px;background:#f0f0f0"></div>
<svg class="a" style="left:595px;top:442px" width="9" height="6"><path d="M0.5 1 H8.5 L4.5 5 Z" fill="#111"/></svg>
<div class="t " style="left:609px;top:440px;">bps</div>
<div class="sep" style="left:395px;top:461px;width:234px;background:#dcdcdc"></div>
<div class="sep" style="left:395px;top:462px;width:234px;background:#fafafa"></div>
<div class="a " style="left:484px;top:467px;width:10px;height:10px;background:#fff;border:1px solid #a6a6a6"></div>
<svg class="a" style="left:485px;top:468px" width="9" height="9"><path d="M1.5 4.5 L3.5 6.8 L7.5 1.8" fill="none" stroke="#111" stroke-width="1.5"/></svg>
<div class="t " style="left:498px;top:467px;">Default Authenticate</div>
<div class="a " style="left:484px;top:482px;width:10px;height:10px;background:#fff;border:1px solid #a6a6a6"></div>
<svg class="a" style="left:485px;top:483px" width="9" height="9"><path d="M1.5 4.5 L3.5 6.8 L7.5 1.8" fill="none" stroke="#111" stroke-width="1.5"/></svg>
<div class="t " style="left:498px;top:482px;">Default Forward</div>
<div class="a " style="left:484px;top:497px;width:10px;height:10px;background:#fff;border:1px solid #a6a6a6"></div>
<div class="t " style="left:498px;top:497px;">Hide SSID</div>
<div class="btn" style="left:644px;top:206px;width:90px;height:19px;border-color:#3a3a3a;">OK</div>
<div class="btn" style="left:644px;top:227px;width:90px;height:19px;">Cancel</div>
<div class="btn" style="left:644px;top:248px;width:90px;height:19px;">Apply</div>
<div class="btn" style="left:644px;top:273px;width:90px;height:19px;">Disable</div>
<div class="btn" style="left:644px;top:294px;width:90px;height:19px;">Comment</div>
<div class="btn" style="left:644px;top:320px;width:90px;height:19px;">Torch</div>
<div class="btn" style="left:644px;top:341px;width:90px;height:19px;">Scan...</div>
<div class="btn" style="left:644px;top:362px;width:90px;height:19px;">Freq. Usage...</div>
<div class="btn" style="left:644px;top:382px;width:90px;height:19px;">Align...</div>
<div class="btn" style="left:644px;top:403px;width:90px;height:19px;">Sniff...</div>
<div class="btn" style="left:644px;top:424px;width:90px;height:19px;">Snooper...</div>
<div class="btn" style="left:644px;top:449px;width:90px;height:19px;">Reset Configuration</div>
<div class="btn" style="left:644px;top:475px;width:90px;height:19px;">Advanced Mode</div>
<div class="a " style="left:387px;top:644px;width:88px;height:16px;border-top:1px solid #c8c8c8;border-left:1px solid #c8c8c8;padding-left:2px;line-height:14px;white-space:nowrap;overflow:hidden">enabled</div>
<div class="a gr" style="left:477px;top:644px;width:87px;height:16px;border-top:1px solid #c8c8c8;border-left:1px solid #c8c8c8;padding-left:2px;line-height:14px;white-space:nowrap;overflow:hidden">running</div>
<div class="a gr" style="left:567px;top:644px;width:87px;height:16px;border-top:1px solid #c8c8c8;border-left:1px solid #c8c8c8;padding-left:2px;line-height:14px;white-space:nowrap;overflow:hidden">slave</div>
<div class="a " style="left:656px;top:644px;width:81px;height:16px;border-top:1px solid #c8c8c8;border-left:1px solid #c8c8c8;padding-left:2px;line-height:14px;white-space:nowrap;overflow:hidden">searching for netw...</div>
</body></html>
